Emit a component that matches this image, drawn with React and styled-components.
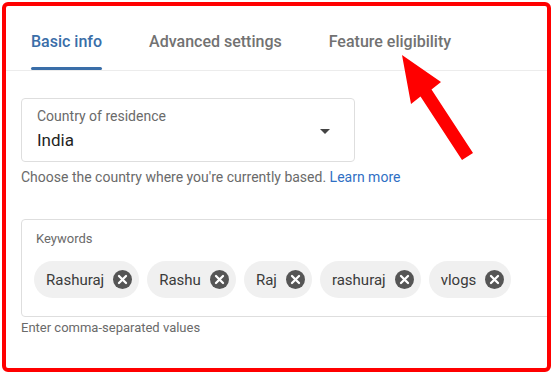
import styled, { createGlobalStyle } from "styled-components";

const GlobalStyle = createGlobalStyle`
  html, body {
    margin: 0;
    padding: 0;
    background: #ffffff;
    font-family: Roboto, "Noto Sans", Arial, sans-serif;
  }
`;

const tabs = ["Basic info", "Advanced settings", "Feature eligibility"];
const keywords = ["Rashuraj", "Rashu", "Raj", "rashuraj", "vlogs"];

function ClearIcon() {
  return (
    <svg width="19" height="19" viewBox="0 0 20 20">
      <circle cx="10" cy="10" r="10" fill="#555555" />
      <path
        d="M6.3 6.3 L13.7 13.7 M13.7 6.3 L6.3 13.7"
        stroke="#ffffff"
        strokeWidth="2.4"
        strokeLinecap="round"
      />
    </svg>
  );
}

function App() {
  return (
    <Page>
      <GlobalStyle />
      <Frame>
        <TabBar>
          {tabs.map((t, i) => (
            <Tab key={t} $active={i === 0}>
              {t}
            </Tab>
          ))}
        </TabBar>
        <Body>
          <SelectBox>
            <FieldText>
              <FieldLabel $size={14}>Country of residence</FieldLabel>
              <SelectValue>India</SelectValue>
            </FieldText>
            <Caret />
          </SelectBox>
          <Helper $size={14}>
            Choose the country where you're currently based.{" "}
            <LearnMore>Learn more</LearnMore>
          </Helper>

          <KeywordBox>
            <FieldLabel $size={13}>Keywords</FieldLabel>
            <ChipRow>
              {keywords.map((k) => (
                <Chip key={k}>
                  <span>{k}</span>
                  <ClearIcon />
                </Chip>
              ))}
            </ChipRow>
          </KeywordBox>
          <Helper $size={13} $tight>
            Enter comma-separated values
          </Helper>
        </Body>
      </Frame>
      <Arrow width="552" height="373" viewBox="0 0 552 373">
        <polygon
          points="402,55 441,82 431.5,89.5 473,153 462,160 420.5,96.5 411,104"
          fill="#ff0000"
        />
      </Arrow>
    </Page>
  );
}

const Page = styled.div`
  position: relative;
  width: 552px;
  height: 373px;
  overflow: hidden;
`;

const Frame = styled.div`
  margin: 2px 0 0 2px;
  width: 549px;
  height: 370px;
  box-sizing: border-box;
  border: 4px solid #ff0000;
  border-radius: 6px;
  overflow: hidden;
  background: #ffffff;
`;

const TabBar = styled.div`
  display: flex;
  gap: 47px;
  padding-left: 25px;
  border-bottom: 1px solid #ececec;
`;

const Tab = styled.div`
  position: relative;
  padding: 27px 0 19px;
  font-size: 16px;
  line-height: 18px;
  font-weight: 500;
  color: ${(p) => (p.$active ? "#3a6ea8" : "#727272")};
  &::after {
    content: "";
    display: ${(p) => (p.$active ? "block" : "none")};
    position: absolute;
    left: 0;
    right: 0;
    bottom: 0;
    height: 3px;
    border-radius: 2px;
    background: #3a6ea8;
  }
`;

const Body = styled.div`
  padding: 27px 0 0 15px;
`;

const SelectBox = styled.div`
  width: 334px;
  height: 64px;
  box-sizing: border-box;
  border: 1px solid #dedede;
  border-radius: 4px;
  padding: 9px 24px 0 15px;
  display: flex;
  align-items: center;
  justify-content: space-between;
`;

const FieldText = styled.div`
  display: flex;
  flex-direction: column;
  align-self: flex-start;
  gap: 5px;
`;

const FieldLabel = styled.div`
  font-size: ${(p) => p.$size}px;
  line-height: 16px;
  color: #6a6a6a;
`;

const SelectValue = styled.div`
  font-size: 17px;
  line-height: 22px;
  color: #1f1f1f;
`;

const Caret = styled.div`
  width: 0;
  height: 0;
  border-left: 5px solid transparent;
  border-right: 5px solid transparent;
  border-top: 5px solid #444444;
  margin-top: -6px;
`;

const Helper = styled.div`
  margin-top: ${(p) => (p.$tight ? "3px" : "7px")};
  font-size: ${(p) => p.$size}px;
  line-height: 16px;
  color: #6a6a6a;
`;

const LearnMore = styled.span`
  color: #2f6fc4;
`;

const KeywordBox = styled.div`
  margin-top: 34px;
  width: 560px;
  height: 98px;
  box-sizing: border-box;
  border: 1px solid #dedede;
  border-radius: 4px;
  padding: 11px 0 0 14px;
  display: flex;
  flex-direction: column;
  gap: 14px;
`;

const ChipRow = styled.div`
  display: flex;
  gap: 8px;
  margin-left: -2px;
`;

const Chip = styled.div`
  display: flex;
  align-items: center;
  gap: 9px;
  height: 37px;
  padding: 0 7px 0 12px;
  border-radius: 19px;
  background: #f0f0f0;
  font-size: 15px;
  color: #3a3a3a;
  span {
    line-height: 18px;
  }
`;

const Arrow = styled.svg`
  position: absolute;
  left: 0;
  top: 0;
  pointer-events: none;
`;

export default App;
